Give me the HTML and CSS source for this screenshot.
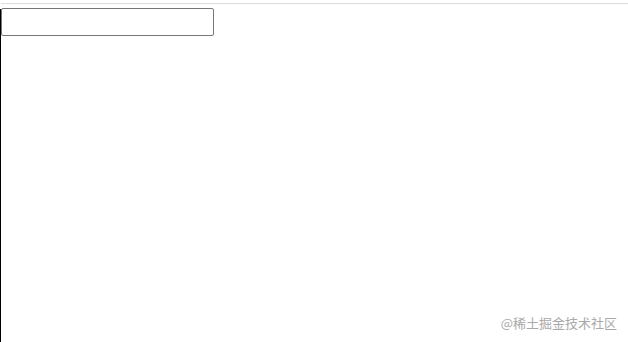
FILE: index.html
```html
<!DOCTYPE html>
<html lang="zh">
<head>
<meta charset="utf-8">
<link rel="stylesheet" href="styles.css">
</head>
<body>
<div class="page">
  <div class="rule"></div>
  <div class="main">
    <input class="field" type="text">
  </div>
  <div class="watermark">@稀土掘金技术社区</div>
</div>
</body>
</html>
```
FILE: styles.css
```css
html, body {
  margin: 0;
  padding: 0;
  height: 100%;
  background: #fff;
}
.page {
  position: relative;
  height: 342px;
  padding-top: 3px;
  box-sizing: border-box;
  display: flex;
  flex-direction: column;
  font-family: "Noto Sans CJK SC", "Liberation Sans", sans-serif;
}
.rule {
  height: 1px;
  background: #dcdcdc;
  margin-left: 1px;
}
.main {
  flex: 1;
  margin-top: 5px;
  border-left: 1px solid #000;
}
.field {
  display: block;
  box-sizing: border-box;
  width: 213px;
  height: 28px;
  margin: -1px 0 0 0;
  border: 1px solid #767676;
  border-radius: 2px;
  padding: 1px 2px;
  background: #fff;
}
.watermark {
  position: absolute;
  right: 11px;
  bottom: 10px;
  font-size: 13px;
  line-height: 18px;
  color: #a9a9a9;
}
```
